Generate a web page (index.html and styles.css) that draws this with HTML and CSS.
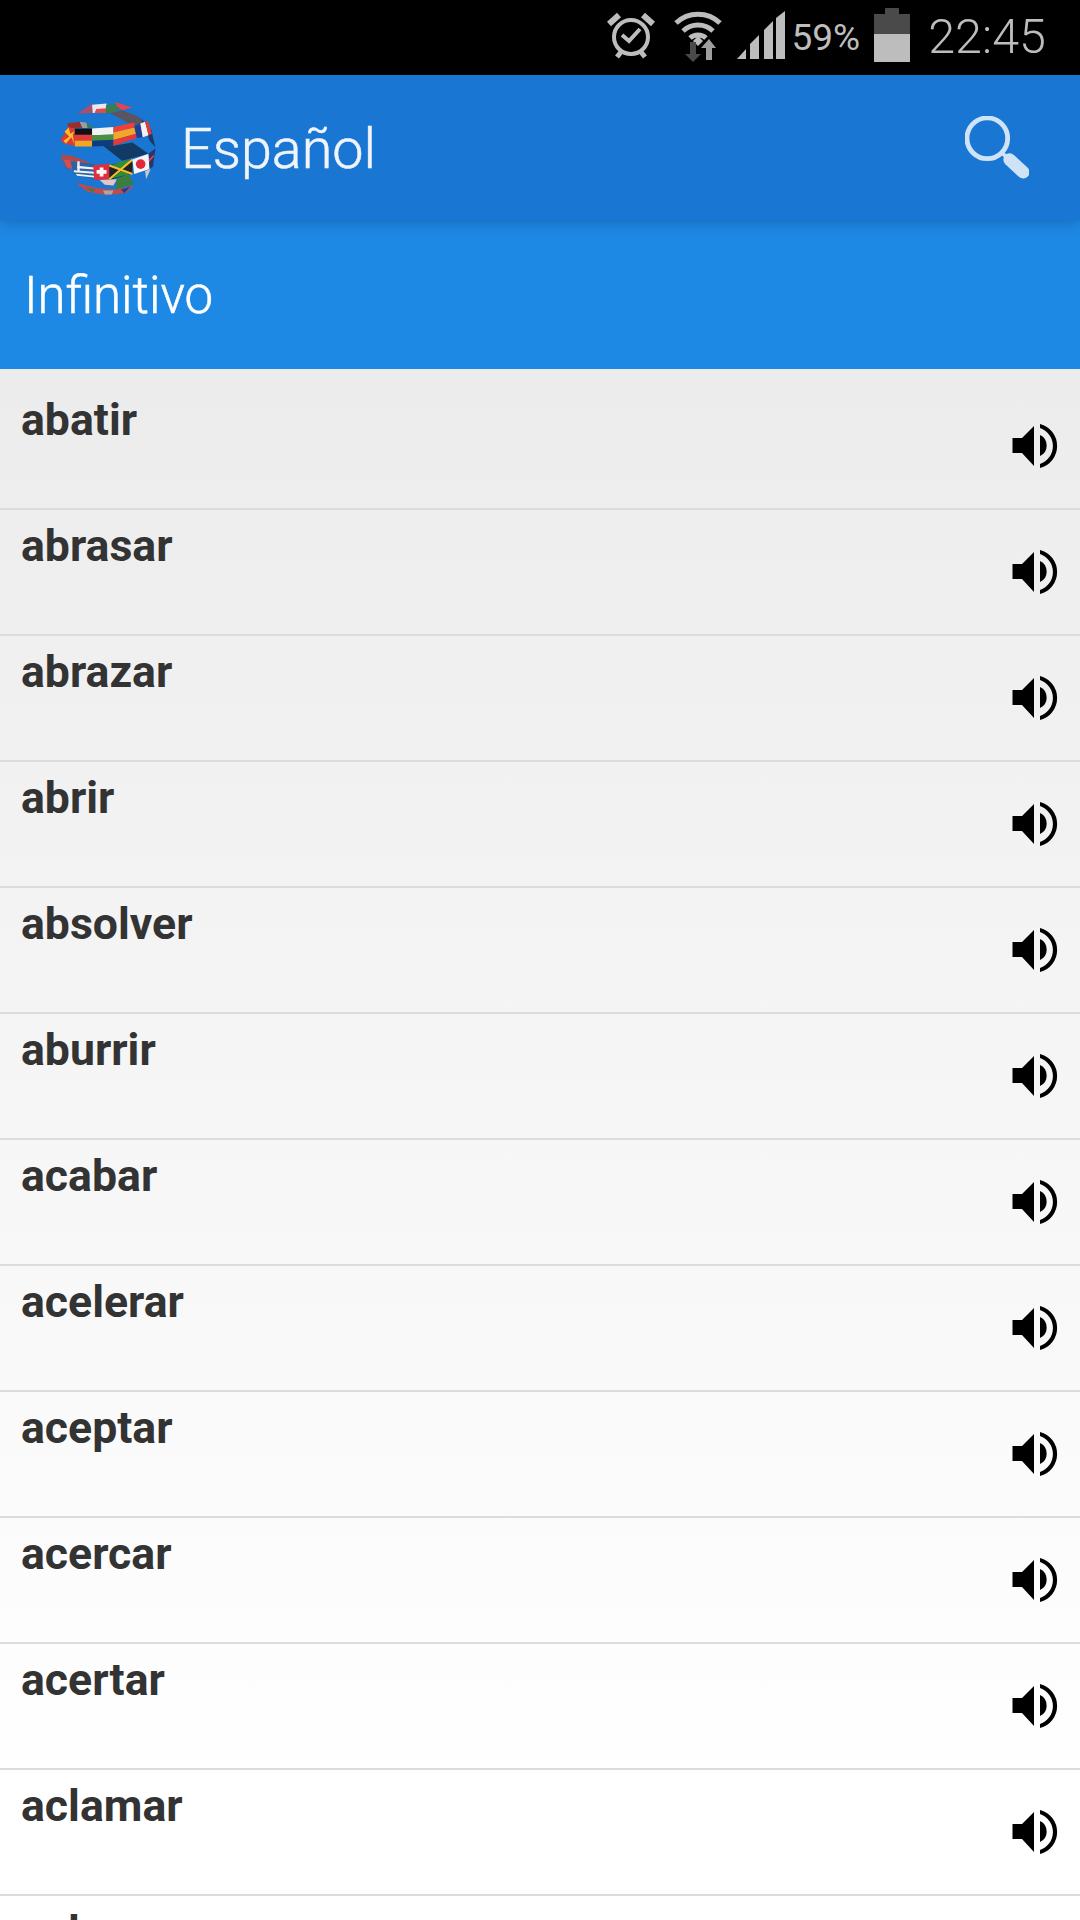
FILE: index.html
```html
<!DOCTYPE html>
<html lang="es">
<head>
<meta charset="utf-8">
<title>Español</title>
<link rel="stylesheet" href="styles.css">
</head>
<body>
<svg class="defs" width="0" height="0" aria-hidden="true">
  <symbol id="spk" viewBox="0 0 48 46">
    <path d="M0.500 14H10L22 2V42L10 29H0.500Z"/>
    <path d="M28 11A11.600 11.600 0 0 1 28 32Z"/>
    <path d="M28 0A22.700 22.700 0 0 1 28 44V40A19 19 0 0 0 28 4Z"/>
  </symbol>
</svg>
<div class="status">
  <svg class="ic-alarm" viewBox="0 0 48 48" fill="none" stroke="#bdbdbd">
    <circle cx="24" cy="26" r="17" stroke-width="4"/>
    <path d="M15 27L22 33L33 21" transform="translate(0 -3)" stroke-width="4"/>
    <path d="M2 13L12 4M46 13L36 4" stroke-width="6"/>
    <path d="M10 46L14 41M38 46L34 41" stroke-width="5"/>
  </svg>
  <svg class="ic-wifi" viewBox="0 0 50 54" fill="none">
    <path d="M3 15A32 32 0 0 1 47 15" stroke="#bdbdbd" stroke-width="5"/>
    <path d="M10 23A22 22 0 0 1 40 23" stroke="#bdbdbd" stroke-width="5"/>
    <path d="M17 30A12 12 0 0 1 33 30" stroke="#bdbdbd" stroke-width="5"/>
    <path d="M20 33L25 28L30 33L25 38Z" fill="#bdbdbd"/>
    <path d="M17 34H23V46H28L20 54L12 46H17Z" fill="#4a4a4a"/>
    <path d="M33 52H39V40H43L36 31L28 40H33Z" fill="#9e9e9e"/>
  </svg>
  <svg class="ic-signal" viewBox="0 0 48 48" fill="#bdbdbd">
    <path d="M0 48L9 38V48Z"/>
    <path d="M13 33L22 24V48H13Z"/>
    <path d="M27 19L36 10V48H27Z"/>
    <path d="M39 7L48 0V48H39Z"/>
  </svg>
  <span class="pct">59%</span>
  <div class="batt"><div class="batt-cap"></div><div class="batt-body"><div class="batt-fill"></div></div></div>
  <span class="clock">22:45</span>
</div>

<header class="appbar">
  <svg class="globe" viewBox="0 0 360 360">
    <g class="globe-g">
      <path fill="#a5506e" d="M85 72L125 44L135 46L130 70Z"/>
      <path fill="#e8e8f0" d="M128 46L170 42L168 70L130 70Z"/>
      <path fill="#e34a4a" d="M140 58L170 56L168 70L135 70Z"/>
      <path fill="#3c7d4a" d="M168 48L200 44L205 62L168 72Z"/>
      <path fill="#e0464e" d="M195 38L245 54L215 62L200 50Z"/>
      <path fill="#5b5560" d="M180 70L216 62L262 80L285 100L245 105Z"/>
      <path fill="#1a3a66" d="M270 85L300 120L312 170L295 150Z"/>
      <path fill="#123a66" d="M160 165L190 165L245 155L292 188L215 208Z"/>
      <path fill="#9c2e2e" d="M55 100L92 95L100 112L62 115Z"/>
      <path fill="#9d9d9d" d="M92 95L112 98L115 113L100 113Z"/>
      <path fill="#3c7d4a" d="M112 100L135 112H115Z"/>
      <path fill="#e03a30" d="M36 150L58 110L78 115V165L50 160Z"/>
      <path fill="#f6c02c" d="M48 124L62 138L45 150L52 158L68 140L76 160L72 132L78 122L65 130L60 112Z"/>
      <path fill="#111" d="M78 115H128V133H78Z"/>
      <path fill="#e53935" d="M78 133H128V150H78Z"/>
      <path fill="#f4a61e" d="M78 150H128V167H78Z"/>
      <path fill="#f2f2f2" d="M128 115L190 110V132L128 134Z"/>
      <path fill="#4c8f3c" d="M128 134L190 132V147L128 150Z"/>
      <path fill="#0e3c7c" d="M128 150L190 147V165L128 167Z"/>
      <path fill="#ef4136" d="M190 110L250 97L252 112L190 126Z"/>
      <path fill="#f4a62a" d="M190 126L252 112L256 130L190 148Z"/>
      <path fill="#e53935" d="M190 148L256 130L258 142L190 165Z"/>
      <path fill="#1f3f94" d="M250 108L268 100L275 140L258 142Z"/>
      <path fill="#f2f2f2" d="M268 100L282 95L292 134L275 140Z"/>
      <path fill="#e53935" d="M282 95L290 92L302 130L292 134Z"/>
      <path fill="#b04a4a" d="M38 190L75 195L130 218L70 210L42 215Z"/>
      <path fill="#3d6ba8" d="M40 208L60 206L65 240L50 232Z"/>
      <path fill="#e04a4a" d="M45 205L70 208L72 232L55 228Z"/>
      <path fill="#2b62a8" d="M65 210L135 218V262L75 248Z"/>
      <path fill="#f2f2f2" d="M85 223L135 228V234L85 230ZM75 236L135 240V246L75 242ZM80 246L135 252V257L85 252Z"/>
      <path fill="#f2f2f2" d="M85 210H92V240H85Z"/>
      <path fill="#e32c3c" d="M131 222L178 217V262L135 264Z"/>
      <path fill="#f7f7f7" d="M150 228H161V235H170V246H161V254H150V246H141V235H150Z"/>
      <path fill="#222" d="M178 222L245 203V245L178 264Z"/>
      <path fill="#2f8d3a" d="M184 222L212 210L240 205L212 232ZM186 260L212 238L238 247Z"/>
      <path fill="none" stroke="#f6c02c" stroke-width="6" d="M178 222L245 247M178 262L245 205"/>
      <path fill="#f4f4f4" d="M245 205L292 188L295 232L250 247Z"/>
      <circle cx="269" cy="218" r="14" fill="#e3263a"/>
      <path fill="#27376e" d="M292 188L312 172L305 225L295 232Z"/>
      <path fill="#d9414e" d="M292 205L308 190V196L294 212Z"/>
      <path fill="#c9c9c9" d="M282 238L298 232L285 262Z"/>
      <path fill="#e4c4c4" d="M150 264L200 262L190 280L165 278Z"/>
      <path fill="#3a7e3d" d="M200 262L232 245L250 275L195 292Z"/>
      <path fill="#c24a4a" d="M80 272L145 288L195 292L250 280L225 303L170 308L115 298Z"/>
      <path fill="#3c7d4a" d="M108 285L138 292L130 300Z"/>
      <path fill="#a8a8a8" d="M160 295H190L185 306H165Z"/>
      <path fill="#1f3f94" d="M212 292L238 284L222 303Z"/>
    </g>
  </svg>
  <h1 class="title">Español</h1>
  <svg class="search" viewBox="0 0 66 66" fill="none" stroke="#cfe3f7">
    <circle cx="23" cy="23" r="21" stroke-width="5"/>
    <path d="M38 38L45 44" stroke-width="4"/>
    <path d="M46 45L60 58" stroke-width="13" stroke-linecap="round"/>
  </svg>
</header>
<div class="subhead">Infinitivo</div>

<ul class="list">
  <li class="row"><span class="word">abatir</span><svg class="spk"><use href="#spk"/></svg></li>
  <li class="row"><span class="word">abrasar</span><svg class="spk"><use href="#spk"/></svg></li>
  <li class="row"><span class="word">abrazar</span><svg class="spk"><use href="#spk"/></svg></li>
  <li class="row"><span class="word">abrir</span><svg class="spk"><use href="#spk"/></svg></li>
  <li class="row"><span class="word">absolver</span><svg class="spk"><use href="#spk"/></svg></li>
  <li class="row"><span class="word">aburrir</span><svg class="spk"><use href="#spk"/></svg></li>
  <li class="row"><span class="word">acabar</span><svg class="spk"><use href="#spk"/></svg></li>
  <li class="row"><span class="word">acelerar</span><svg class="spk"><use href="#spk"/></svg></li>
  <li class="row"><span class="word">aceptar</span><svg class="spk"><use href="#spk"/></svg></li>
  <li class="row"><span class="word">acercar</span><svg class="spk"><use href="#spk"/></svg></li>
  <li class="row"><span class="word">acertar</span><svg class="spk"><use href="#spk"/></svg></li>
  <li class="row"><span class="word">aclamar</span><svg class="spk"><use href="#spk"/></svg></li>
  <li class="row"><span class="word">aclarar</span><svg class="spk"><use href="#spk"/></svg></li>
</ul>
</body>
</html>
```
FILE: styles.css
```css
html, body {
  margin: 0;
  padding: 0;
  width: 1080px;
  height: 1920px;
  overflow: hidden;
  background: #fff;
  font-family: Roboto, "Liberation Sans", sans-serif;
}
.defs { display: block; height: 0; }

.status {
  height: 75px;
  background: #000;
  color: #bdbdbd;
  display: flex;
  align-items: center;
  justify-content: flex-end;
  padding: 0 34px 6px 0;
  box-sizing: border-box;
}
.ic-alarm { width: 48px; height: 48px; margin-right: 18px; }
.ic-wifi { width: 50px; height: 54px; margin-right: 14px; }
.ic-signal { width: 48px; height: 48px; margin-right: 7px; }
.pct { font-size: 37px; font-weight: 400; margin-right: 14px; line-height: 40px; padding-top: 7px; }
.batt { width: 36px; height: 54px; display: flex; flex-direction: column; align-items: center; margin-right: 18px; }
.batt-cap { width: 14px; height: 6px; background: #4a4a4a; }
.batt-body { flex: 1; width: 36px; background: #4a4a4a; display: flex; align-items: flex-end; }
.batt-fill { width: 100%; height: 28px; background: #bdbdbd; }
.clock { font-size: 48.500px; font-weight: 300; line-height: 54px; padding-top: 5px; }

.appbar {
  height: 145px;
  background: #1976d2;
  display: flex;
  align-items: center;
  padding: 0 51px 0 48px;
  position: relative;
  z-index: 1;
  box-shadow: 0 2px 14px rgba(0, 0, 0, 0.22);
}
.globe { width: 124px; height: 124px; margin-top: 6px; }
.globe-g { filter: blur(0.7px); }
.title {
  margin: 2px 0 0 9px;
  flex: 1;
  font-size: 55.700px;
  font-weight: 300;
  -webkit-text-stroke: 0.5px #f1f5fb;
  color: #f1f5fb;
  line-height: 64px;
}
.search { width: 64px; height: 64px; }

.subhead {
  height: 149px;
  background: #1e88e5;
  color: #fff;
  font-size: 51px;
  font-weight: 300;
  -webkit-text-stroke: 0.5px #fff;
  display: flex;
  align-items: center;
  padding: 2px 0 0 24px;
  box-sizing: border-box;
}

.list {
  list-style: none;
  margin: 0;
  padding: 15px 0 0;
  height: 1551px;
  box-sizing: border-box;
  background: linear-gradient(#ececec, #ffffff 92%);
  overflow: hidden;
}
.row {
  height: 126px;
  box-sizing: border-box;
  border-bottom: 2px solid #dcdcdc;
  display: flex;
  justify-content: space-between;
  align-items: center;
  padding: 0 20px 0 21px;
}
.word {
  align-self: flex-start;
  font-size: 44.600px;
  font-weight: 700;
  color: #333;
  line-height: 50px;
  margin-top: 11px;
}
.spk { width: 48px; height: 46px; margin-top: 2px; fill: #000; }
```
